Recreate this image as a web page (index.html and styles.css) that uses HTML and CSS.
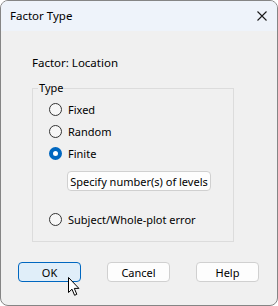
FILE: index.html
```html
<!DOCTYPE html>
<html lang="en">

<head>
    <meta charset="UTF-8">
    <title>Factor Type</title>
    <link rel="stylesheet" href="styles.css">
</head>

<body>
    <div class="window">
        <div class="title-bar">
            <span class="title">Factor Type</span>
            <span class="close-btn">
                <svg width="10" height="10" viewBox="0 0 10 10">
                    <path d="M0.5 0.5 L9.5 9.5 M9.5 0.5 L0.5 9.5" stroke="#1a1a1a" stroke-width="1.1" fill="none" />
                </svg>
            </span>
        </div>

        <div class="content">
            <div class="factor-name">Factor: Location</div>

            <fieldset class="group">
                <legend>Type</legend>
                <div class="options">
                    <div class="radio-row"><span class="radio"></span>Fixed</div>
                    <div class="radio-row"><span class="radio"></span>Random</div>
                    <div class="radio-row"><span class="radio checked"></span>Finite</div>
                    <div class="btn specify">Specify number(s) of levels</div>
                    <div class="radio-row last"><span class="radio"></span>Subject/Whole-plot error</div>
                </div>
            </fieldset>

            <div class="buttons">
                <div class="btn default">OK</div>
                <div class="btn">Cancel</div>
                <div class="btn">Help</div>
            </div>
        </div>

        <svg class="cursor" width="13" height="20" viewBox="0 0 13 20">
            <path d="M0.5 0.5 L0.5 15.5 L4 12.2 L6.6 18.3 L8.8 17.3 L6.3 11.4 L10.9 11.4 Z" fill="#fff" stroke="#000" stroke-width="1" stroke-linejoin="round" />
        </svg>
    </div>
</body>

</html>
```

FILE: styles.css
```css
body {
    margin: 0;
    background-color: #fff;
    font-family: "Noto Sans", "Open Sans", sans-serif;
    font-size: 11px;
    color: #000;
}

.window {
    position: relative;
    width: 278px;
    height: 306px;
    box-sizing: border-box;
    border: 1px solid #858585;
    border-radius: 8px;
    overflow: hidden;
    background-color: #f0f0f0;
    display: flex;
    flex-direction: column;
}

.title-bar {
    height: 30px;
    background-color: #eef3fa;
    display: flex;
    align-items: center;
    justify-content: space-between;
    padding: 0 9px 0 9px;
}

.title {
    font-size: 11.5px;
    line-height: 16px;
}

.close-btn {
    display: flex;
    width: 10px;
    height: 10px;
    margin-right: 1px;
}

.content {
    flex: 1;
    padding: 24px 0 0 31px;
}

.factor-name {
    font-size: 11.5px;
    line-height: 16px;
}

.group {
    margin: 9px 0 0 0;
    width: 202px;
    box-sizing: border-box;
    border: 1px solid #dcdcdc;
    padding: 2px 0 11px 5px;
}

.group legend {
    padding: 0 1px;
    line-height: 16px;
}

.options {
    padding-left: 11px;
    display: flex;
    flex-direction: column;
    align-items: flex-start;
}

.radio-row {
    height: 22px;
    display: flex;
    align-items: center;
    gap: 6px;
    white-space: nowrap;
}

.radio-row.last {
    margin-top: 17px;
}

.radio {
    width: 13px;
    height: 13px;
    box-sizing: border-box;
    border: 1px solid #333;
    border-radius: 50%;
    background-color: #f7f7f7;
}

.radio.checked {
    border: 4px solid #0067c0;
    background-color: #fff;
}

.btn {
    height: 20px;
    width: 63px;
    box-sizing: border-box;
    border: 1px solid #d0d0d0;
    border-radius: 4px;
    background-color: #fdfdfd;
    display: flex;
    align-items: center;
    justify-content: center;
    white-space: nowrap;
}

.btn.specify {
    width: 144px;
    margin: 7px 0 0 18px;
}

.btn.default {
    border-color: #0067c0;
    background-color: #e0eef9;
}

.buttons {
    display: flex;
    gap: 26px;
    margin: 20px 0 0 -14px;
}

.cursor {
    position: absolute;
    left: 67px;
    top: 276px;
}
```
